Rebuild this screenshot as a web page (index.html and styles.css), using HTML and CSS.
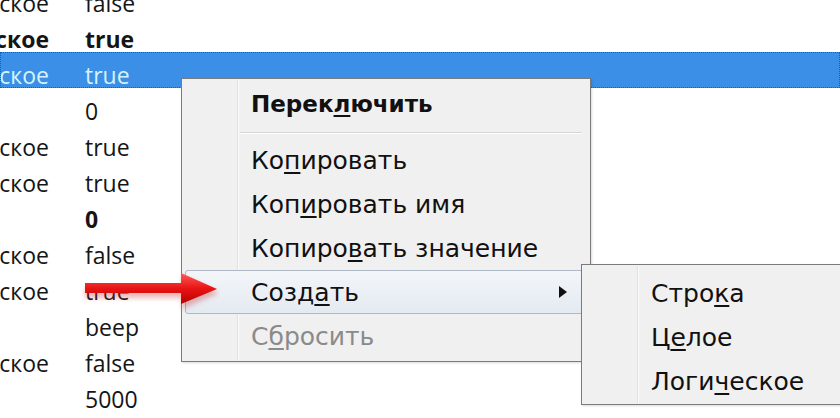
FILE: index.html
```html
<!DOCTYPE html>
<html lang="ru">
<head>
    <meta charset="UTF-8">
    <meta name="viewport" content="width=device-width, initial-scale=1.0">
    <title>about:config</title>
    <link rel="stylesheet" href="styles.css">
</head>

<body>
    <div class="prefs">
        <div class="row"><div class="type"><span>Логическое</span></div><div class="value">false</div></div>
        <div class="row changed"><div class="type"><span>Логическое</span></div><div class="value">true</div></div>
        <div class="row selected"><div class="type"><span>Логическое</span></div><div class="value">true</div></div>
        <div class="row"><div class="type"></div><div class="value">0</div></div>
        <div class="row"><div class="type"><span>Логическое</span></div><div class="value">true</div></div>
        <div class="row"><div class="type"><span>Логическое</span></div><div class="value">true</div></div>
        <div class="row changed"><div class="type"></div><div class="value">0</div></div>
        <div class="row"><div class="type"><span>Логическое</span></div><div class="value">false</div></div>
        <div class="row"><div class="type"><span>Логическое</span></div><div class="value">true</div></div>
        <div class="row"><div class="type"></div><div class="value">beep</div></div>
        <div class="row"><div class="type"><span>Логическое</span></div><div class="value">false</div></div>
        <div class="row"><div class="type"></div><div class="value">5000</div></div>
    </div>

    <div class="menu main-menu">
        <div class="item default">Перек<u>л</u>ючить</div>
        <div class="separator"></div>
        <div class="item">Ко<u>п</u>ировать</div>
        <div class="item">Коп<u>и</u>ровать имя</div>
        <div class="item">Копиро<u>в</u>ать значение</div>
        <div class="item active">
            <span>Созд<u>а</u>ть</span>
            <svg class="submenu-arrow" width="8" height="12" viewBox="0 0 8 12"><path d="M0 0 L8 6 L0 12 Z" fill="#111"/></svg>
        </div>
        <div class="item disabled">С<u>б</u>росить</div>
    </div>

    <div class="menu sub-menu">
        <div class="item">Стро<u>к</u>а</div>
        <div class="item">Ц<u>е</u>лое</div>
        <div class="item">Логи<u>ч</u>еское</div>
    </div>

    <svg class="pointer" width="150" height="50" viewBox="0 0 150 50">
        <defs>
            <linearGradient id="red" x1="0" y1="0" x2="0" y2="1">
                <stop offset="0" stop-color="#ff5a5a"/>
                <stop offset="0.5" stop-color="#e81414"/>
                <stop offset="1" stop-color="#b80000"/>
            </linearGradient>
            <filter id="blur" x="-20%" y="-50%" width="140%" height="200%">
                <feGaussianBlur stdDeviation="2.5"/>
            </filter>
        </defs>
        <!-- shadow, then arrow; origin is x=70, y=265 on the page -->
        <path d="M15 23 H112 V11 L149 28 L112 44 V33 H15 Z" fill="#c83030" opacity="0.35" filter="url(#blur)"/>
        <path d="M15 18 H111 V8 L147 24 L111 39 V28 H15 Z" fill="url(#red)"/>
    </svg>
</body>
</html>
```

FILE: styles.css
```css
body {
    margin: 0;
    width: 840px;
    height: 418px;
    overflow: hidden;
    position: relative;
    background: #fff;
    font-family: "Open Sans", "Noto Sans", sans-serif;
    font-size: 23px;
    color: #151515;
}

.prefs {
    margin-top: -20px;
}

.row {
    display: flex;
    height: 36px;
    line-height: 36px;
    box-sizing: border-box;
    padding-top: 5px;
}

.row .type {
    width: 49px;
    display: flex;
    justify-content: flex-end;
    overflow: hidden;
    white-space: nowrap;
}

.row .value {
    margin-left: 36px;
}

.row.changed {
    font-weight: bold;
}

.row.selected {
    background: #3b8fe6;
    color: #d4f3ff;
    outline: 1px dotted #1c5ea8;
    outline-offset: -1px;
}

/* context menu */
.menu {
    position: absolute;
    box-sizing: border-box;
    background: #f0f0f0;
    border: 1px solid #7b7b7b;
    font-family: "DejaVu Sans", sans-serif;
    font-size: 25px;
    color: #111;
    box-shadow: 1px 1px 2px rgba(0, 0, 0, 0.15);
}

.menu::before {
    content: "";
    position: absolute;
    left: 55px;
    top: 1px;
    bottom: 1px;
    border-left: 1px solid #e0e0e0;
    border-right: 1px solid #fbfbfb;
}

.main-menu {
    left: 181px;
    top: 78px;
    width: 410px;
    padding: 3px 0;
}

.sub-menu {
    left: 581px;
    top: 264px;
    width: 320px;
    padding: 6px 0 1px;
}

.item {
    position: relative;
    display: flex;
    align-items: center;
    height: 44px;
    margin: 0 3px;
    padding-left: 65px;
    padding-right: 19px;
    box-sizing: border-box;
    border: 1px solid transparent;
    border-radius: 3px;
    white-space: nowrap;
}

.item u {
    text-underline-offset: 3px;
}

.item.default {
    font-weight: bold;
    font-size: 23px;
}

.item.active {
    background: linear-gradient(#f3f6f9, #e4eaf1);
    border-color: #aeb8c4;
}

.item.disabled {
    color: #8a8a8a;
}

.submenu-arrow {
    margin-left: auto;
}

.separator {
    height: 12px;
    margin-left: 58px;
    margin-right: 8px;
    position: relative;
}

.separator::after {
    content: "";
    position: absolute;
    left: 0;
    right: 0;
    top: 6px;
    border-top: 1px solid #d6d6d6;
    border-bottom: 1px solid #fff;
}

.pointer {
    position: absolute;
    left: 70px;
    top: 265px;
}
```
